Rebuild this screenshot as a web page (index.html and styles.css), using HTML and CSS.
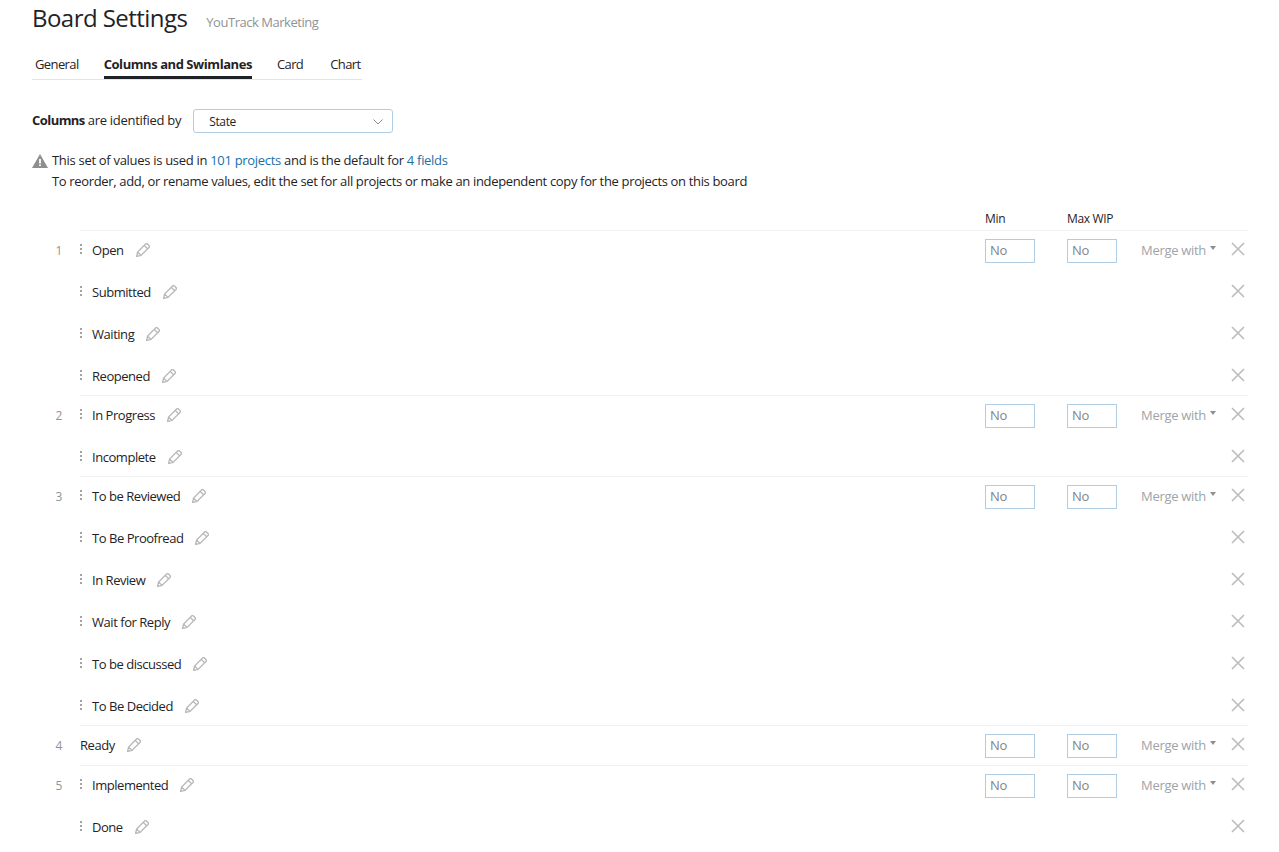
FILE: index.html
```html
<!DOCTYPE html>
<html lang="en">
<head>
<meta charset="utf-8">
<title>Board Settings</title>
<link rel="stylesheet" href="styles.css">
</head>
<body>
<svg class="defs" width="0" height="0" aria-hidden="true">
  <symbol id="pen" viewBox="0 0 14 14"><path d="M.6 13.400l1-4.400L9.800.8a1 1 0 0 1 1.400 0l2 2a1 1 0 0 1 0 1.400L5 12.400zM1.600 9L5 12.400M8.200 2.400l3.400 3.400" fill="none" stroke="currentColor" stroke-width="1.300"/></symbol>
  <symbol id="cross" viewBox="0 0 14 14"><path d="M1 1l12 12M13 1L1 13" fill="none" stroke="currentColor" stroke-width="1.600"/></symbol>
</svg>
<header class="head"><h1>Board Settings</h1><span class="project">YouTrack Marketing</span></header>
<nav class="tabs"><a>General</a><a class="active">Columns and Swimlanes</a><a>Card</a><a class="last">Chart</a></nav>
<div class="field"><span class="field-label"><b>Columns</b> are identified by</span>
  <div class="select"><span>State</span><svg width="10" height="6" viewBox="0 0 10 6"><path d="M.5.5L5 5 9.500.5" fill="none" stroke="#888c90"/></svg></div>
</div>
<div class="note">
  <svg class="warn" width="16" height="14" viewBox="0 0 16 14"><path fill-rule="evenodd" d="M8 0l8 14H0zM7.100 5v4.400h1.800V5zm0 5.400V12h1.800v-1.600z" fill="#8f8f8f"/></svg>
  <div><p class="note-first">This set of values is used in <a>101 projects</a> and is the default for <a>4 fields</a></p>
  <p>To reorder, add, or rename values, edit the set for all projects or make an independent copy for the projects on this board</p></div>
</div>
<div class="labels"><span class="l-min">Min</span><span>Max WIP</span></div>
<section class="group"><div class="num">1</div><div class="rows">
  <div class="row first"><i class="grip"></i><span class="name">Open</span><svg class="pen"><use href="#pen"/></svg><span class="limits"><span class="input">No</span><span class="input">No</span><span class="merge">Merge with<i class="caret"></i></span></span><svg class="x"><use href="#cross"/></svg></div>
  <div class="row"><i class="grip"></i><span class="name">Submitted</span><svg class="pen"><use href="#pen"/></svg><svg class="x"><use href="#cross"/></svg></div>
  <div class="row"><i class="grip"></i><span class="name">Waiting</span><svg class="pen"><use href="#pen"/></svg><svg class="x"><use href="#cross"/></svg></div>
  <div class="row"><i class="grip"></i><span class="name">Reopened</span><svg class="pen"><use href="#pen"/></svg><svg class="x"><use href="#cross"/></svg></div>
</div></section>
<section class="group"><div class="num">2</div><div class="rows">
  <div class="row first"><i class="grip"></i><span class="name">In Progress</span><svg class="pen"><use href="#pen"/></svg><span class="limits"><span class="input">No</span><span class="input">No</span><span class="merge">Merge with<i class="caret"></i></span></span><svg class="x"><use href="#cross"/></svg></div>
  <div class="row"><i class="grip"></i><span class="name">Incomplete</span><svg class="pen"><use href="#pen"/></svg><svg class="x"><use href="#cross"/></svg></div>
</div></section>
<section class="group"><div class="num">3</div><div class="rows">
  <div class="row first"><i class="grip"></i><span class="name">To be Reviewed</span><svg class="pen"><use href="#pen"/></svg><span class="limits"><span class="input">No</span><span class="input">No</span><span class="merge">Merge with<i class="caret"></i></span></span><svg class="x"><use href="#cross"/></svg></div>
  <div class="row"><i class="grip"></i><span class="name">To Be Proofread</span><svg class="pen"><use href="#pen"/></svg><svg class="x"><use href="#cross"/></svg></div>
  <div class="row"><i class="grip"></i><span class="name">In Review</span><svg class="pen"><use href="#pen"/></svg><svg class="x"><use href="#cross"/></svg></div>
  <div class="row"><i class="grip"></i><span class="name">Wait for Reply</span><svg class="pen"><use href="#pen"/></svg><svg class="x"><use href="#cross"/></svg></div>
  <div class="row"><i class="grip"></i><span class="name">To be discussed</span><svg class="pen"><use href="#pen"/></svg><svg class="x"><use href="#cross"/></svg></div>
  <div class="row"><i class="grip"></i><span class="name">To Be Decided</span><svg class="pen"><use href="#pen"/></svg><svg class="x"><use href="#cross"/></svg></div>
</div></section>
<section class="group single"><div class="num">4</div><div class="rows">
  <div class="row first"><span class="name">Ready</span><svg class="pen"><use href="#pen"/></svg><span class="limits"><span class="input">No</span><span class="input">No</span><span class="merge">Merge with<i class="caret"></i></span></span><svg class="x"><use href="#cross"/></svg></div>
</div></section>
<section class="group"><div class="num">5</div><div class="rows">
  <div class="row first"><i class="grip"></i><span class="name">Implemented</span><svg class="pen"><use href="#pen"/></svg><span class="limits"><span class="input">No</span><span class="input">No</span><span class="merge">Merge with<i class="caret"></i></span></span><svg class="x"><use href="#cross"/></svg></div>
  <div class="row"><i class="grip"></i><span class="name">Done</span><svg class="pen"><use href="#pen"/></svg><svg class="x"><use href="#cross"/></svg></div>
</div></section>
</body>
</html>
```
FILE: styles.css
```css
* { box-sizing: border-box; }
html, body { margin: 0; height: 852px; overflow: hidden; }
body { padding: 0 31px 0 32px; background: #fff; color: #1f2326; font: 13px/18px "Open Sans", "Noto Sans", sans-serif; letter-spacing: -.34px; }
.defs { position: absolute; }
.head { display: flex; align-items: baseline; height: 40px; padding-top: 2px; }
h1 { margin: 0 19px 0 0; font-size: 24px; line-height: 32px; font-weight: 400; letter-spacing: -.55px; }
.project { color: #8f9396; letter-spacing: -.47px; }
.tabs { display: flex; gap: 25px; width: 330px; height: 40px; padding: 15px 0 0 3px; border-bottom: 1px solid #dfe5eb; letter-spacing: -.6px; }
.tabs a { height: 24px; white-space: nowrap; }
.tabs .last { margin-left: 2px; }
.tabs .active { font-weight: 700; letter-spacing: -.44px; border-bottom: 3px solid #1f2326; }
.field { display: flex; align-items: center; gap: 12px; height: 24px; margin-top: 29px; }
.field-label { margin-top: -2px; letter-spacing: -.3px; }
.field-label b { letter-spacing: -.55px; }
.select { display: flex; align-items: center; justify-content: space-between; width: 200px; height: 24px; padding: 2px 9px 0 15px; border: 1px solid #b1cde3; border-radius: 3px; font-size: 12px; }
.note { display: flex; gap: 4px; margin-top: 18px; }
.warn { margin-top: 3px; flex: none; }
.note p { margin: 0 0 3px; }
.note .note-first { letter-spacing: -.3px; }
.note a { color: #1a6fa8; }
.labels { display: flex; height: 20px; margin-top: 17px; padding-left: 953px; font-size: 12px; }
.l-min { width: 82px; }
.group { display: flex; }
.num { width: 48px; height: 39px; padding: 12px 18px 0 0; text-align: right; color: #8f9498; font-size: 12px; }
.rows { flex: 1; border-top: 1px solid #eff1f3; }
.row { display: flex; align-items: center; height: 42px; padding-top: 4px; }
.row.first { height: 38px; padding-top: 0; }
.single .rows { min-height: 40px; }
.grip { width: 2px; height: 12px; margin: -3px 10px 0 0; background: radial-gradient(circle, #a3a3a3 1px, transparent 1.100px) 0 0 / 2px 4px; }
.name { letter-spacing: -.46px; }
.pen { width: 14px; height: 14px; margin-left: 12px; color: #b8b8b8; }
.limits { display: flex; align-items: center; margin-left: auto; }
.input { width: 50px; height: 24px; margin: 2px 32px 0 0; padding: 1px 4px; border: 1px solid #b1cde3; color: #7f8488; }
.input + .input { margin-right: 24px; }
.merge { display: flex; width: 90px; color: #a0a4a8; letter-spacing: -.3px; }
.caret { width: 0; height: 0; margin: 5px 0 0 4px; border: 3px solid transparent; border-top: 4px solid #8f8f8f; border-bottom: 0; }
.x { width: 14px; height: 14px; margin: -2px 3px 0 auto; color: #bcbcbc; flex: none; }
.limits + .x { margin-left: 0; }
```
